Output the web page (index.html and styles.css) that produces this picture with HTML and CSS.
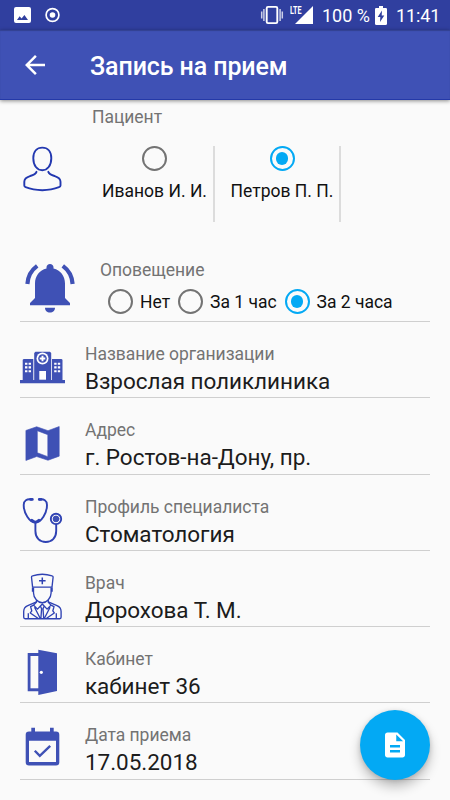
FILE: index.html
```html
<!DOCTYPE html>
<html lang="ru">
<head>
<meta charset="utf-8">
<title>Запись на прием</title>
<link rel="stylesheet" href="styles.css">
</head>
<body>
<div class="screen">
  <div class="status">
    <svg class="status-left" width="64" height="30" viewBox="0 0 64 30">
      <path fill="#fff" fill-rule="evenodd" d="M16 7h13a2 2 0 0 1 2 2v12a2 2 0 0 1-2 2H16a2 2 0 0 1-2-2V9a2 2 0 0 1 2-2zM17 20h11l-3.600-5-2.800 3.600-2-2.400z"/>
      <circle cx="52.500" cy="15" r="6.400" fill="none" stroke="#fff" stroke-width="1.700"/><circle cx="52.500" cy="15" r="2.800" fill="#fff"/>
    </svg>
    <svg class="vibrate" width="24" height="30" viewBox="260 0 24 30" fill="none" stroke="#fff">
      <rect x="266.700" y="6.900" width="10.600" height="16.200" rx="1.300" stroke-width="1.900"/>
      <path stroke-width="1.500" opacity=".75" d="M263.900 9v12M280.100 9v12M261.700 11.500v7M282.300 11.500v7"/>
    </svg>
    <span class="lte">LTE</span>
    <svg class="signal" width="18" height="18" viewBox="0 0 18 18"><path fill="#fff" d="M0 18 18 0v18z"/></svg>
    <span class="percent">100 %</span>
    <svg class="battery" width="12" height="19" viewBox="0 0 12 19"><path fill="#fff" d="M4 0h4v2h2.500A1.300 1.300 0 0 1 12 3.300v14A1.500 1.500 0 0 1 10.500 19h-9A1.500 1.500 0 0 1 0 17.300v-14A1.300 1.300 0 0 1 1.500 2H4z"/><path fill="#303f9f" d="M7 4.500 2.700 11H5.300L5 16l4.300-6.500H6.700z"/></svg>
    <span class="time">11:41</span>
  </div>
  <header class="appbar">
    <svg width="30" height="30" viewBox="0 0 24 24"><path fill="#fff" d="M20 11H7.830l5.590-5.590L12 4l-8 8 8 8 1.410-1.410L7.830 13H20v-2z"/></svg>
    <h1>Запись на прием</h1>
  </header>
  <main>
    <section class="patient">
      <svg class="icon" width="65" height="145" viewBox="20 100 65 145" fill="none" stroke="#2338b0" stroke-width="1.900" stroke-linecap="round">
        <path d="M42.300 147.600c-5.400 0-9 3.900-9 10.600 0 7.400 3.900 12 9 12s9-4.600 9-12c0-6.700-3.600-10.600-9-10.600z"/>
        <path d="M36.500 171.800c-1 2.700-3.200 3.300-6.500 4.300-4.200 1.300-5.700 3-5.700 5.600v3.800c0 1 .5 1.400 1.300 1.700 10 4 23.400 4 33.400 0 .8-.3 1.500-.7 1.500-1.700v-3.800c0-2.600-1.500-4.300-5.700-5.600-3.300-1-5.500-1.600-6.500-4.300"/>
      </svg>
      <div class="patient-body">
        <div class="label">Пациент</div>
        <div class="people">
          <div class="person"><i class="radio"></i><span class="name">Иванов И. И.</span></div>
          <div class="person second"><i class="radio on"></i><span class="name">Петров П. П.</span></div>
        </div>
      </div>
    </section>
    <section class="notify">
      <svg class="icon" width="65" height="76" viewBox="20 245 65 76">
        <path fill="#3f51b5" d="M50 264c2 0 3.500 1.300 3.500 3.200v1.300C60.500 270.300 65 276 65 283.500V298l5 5v2.200H30V303l5-5v-14.500c0-7.500 4.500-13.200 11.500-15v-1.300c0-1.900 1.500-3.200 3.500-3.200zM45 307.700h10c0 2.700-2 4.800-5 4.800s-5-2.100-5-4.800z"/>
        <path fill="none" stroke="#3f51b5" stroke-width="4.200" d="M37.200 265.900c-5.500 4-9.300 10-9.800 18.100M62.800 265.900c5.500 4 9.300 10 9.800 18.100"/>
      </svg>
      <div class="notify-body">
        <div class="label">Оповещение</div>
        <div class="options">
          <span class="option o1"><i class="radio"></i><span>Нет</span></span>
          <span class="option o2"><i class="radio"></i><span>За 1 час</span></span>
          <span class="option o3"><i class="radio on"></i><span>За 2 часа</span></span>
        </div>
      </div>
    </section>
    <section class="row">
      <svg class="icon" width="65" height="75" viewBox="20 322 65 75">
        <path fill="#3f51b5" d="M20 380h2.700v-20.200l1-.8h9.600v21h.9v-27l1.200-1.300H50l1.200 1.300v27h.8v-21h9.500l1 .8V380H65v3.200H20z"/>
        <circle cx="42.500" cy="358.500" r="6" fill="#fff"/><circle cx="42.500" cy="358.500" r="4.300" fill="#3f51b5"/>
        <path stroke="#fff" stroke-width="1.900" d="M42.500 355.700v5.600M39.700 358.500h5.600"/>
        <path fill="#fff" d="M39.300 371H46v8.700h-6.700z"/>
        <path stroke="#fff" stroke-width="2.100" stroke-dasharray="2.400 1.200" d="M25 363.700h6M25 367.400h6M25 371.200h6M54.200 363.700h6M54.200 367.400h6M54.200 371.200h6"/>
      </svg>
      <div><div class="label">Название организации</div><div class="value">Взрослая поликлиника</div></div>
    </section>
    <section class="row">
      <svg class="icon" width="65" height="75" viewBox="20 398.250 65 75"><path fill="#3f51b5" stroke="#3f51b5" stroke-width=".6" fill-rule="evenodd" d="m25.900 430.700 10.800-3.700 11.300 3.900 11.200-4.100v29.600L48 460.500l-11.300-3.700-10.800 3.900zM37.300 431v22l10.500 3.900v-22z"/></svg>
      <div><div class="label">Адрес</div><div class="value">г. Ростов-на-Дону, пр.</div></div>
    </section>
    <section class="row">
      <svg class="icon" width="65" height="75" viewBox="20 474.500 65 75" fill="none" stroke="#2f42b3" stroke-width="1.900" stroke-linecap="round">
        <path d="M31.500 499c-4.500-.8-7.800 1-7.800 5.500 0 8 5.700 17.500 11.700 17.500S47 512.500 47 504.500c0-4.500-3.300-6.300-7.400-5.500M35.400 522v8.500c0 7 4.500 11 10.400 11s10.400-4 10.400-11V524"/>
        <path stroke-width="2.900" d="M30.600 498.900h1.700M39.300 498.900H41M31.800 519.800c2.400 2.500 4.800 2.500 7.200 0"/>
        <circle cx="56" cy="518.400" r="5.200"/><circle cx="56" cy="518.400" r="2.900" fill="#3f51b5" stroke-width=".8"/>
      </svg>
      <div><div class="label">Профиль специалиста</div><div class="value">Стоматология</div></div>
    </section>
    <section class="row">
      <svg class="icon" width="65" height="75" viewBox="20 550.750 65 75" fill="none" stroke="#2f42b3" stroke-width="1.350" stroke-linejoin="round">
        <path d="M32.600 586.800 31.500 577c-.1-.8.3-1.200 1-1.400 6.300-2 13.300-2 19.600 0 .7.200 1.100.6 1 1.400L52 586.800z"/>
        <path stroke-width="1.500" d="M42.300 577.300v6.600M39 580.600h6.600"/>
        <path d="M33.500 587.300v5.500c0 4.800 4.400 9.700 8.800 9.700s8.800-4.900 8.800-9.700v-5.500M32.500 587.300v4.300M52.100 587.300v4.300M36.500 599.500v2.200l-8.700 3.600c-2.900 1.200-4.100 3-4.100 6v5.800c0 .9.500 1.400 1.400 1.400h34.600c.9 0 1.400-.5 1.400-1.400v-5.800c0-3-1.200-4.800-4.100-6l-8.700-3.600v-2.200"/>
        <path d="m36.500 601.700-2.900 3.200 3.900 4 4.800-5.200 4.800 5.200 3.900-4-2.900-3.200M33.600 604.900l-3 1.500 1.200 4.300-1.500 2 8 5.600M51 604.900l3 1.500-1.200 4.300 1.500 2-8 5.600M34.500 607l5.800 11.300M50.100 607l-5.800 11.300M40.500 606l1.100 2.500-.7 9.500M44.100 606l-1.100 2.500.7 9.500M28.300 613v5.300M56.300 613v5.300"/>
      </svg>
      <div><div class="label">Врач</div><div class="value">Дорохова Т. М.</div></div>
    </section>
    <section class="row">
      <svg class="icon" width="65" height="75" viewBox="20 627 65 75"><path fill="#3f51b5" d="M27.700 653h10.600v-3.300L57 653.300V691l-18.700 4v-3.800H27.700z"/><path fill="#fafafa" d="M30.500 656h7.800v32.300h-7.800z"/><circle cx="41.300" cy="672.300" r="1.600" fill="#fff"/></svg>
      <div><div class="label">Кабинет</div><div class="value">кабинет 36</div></div>
    </section>
    <section class="row">
      <svg class="icon" width="65" height="75" viewBox="20 703.250 65 75"><path fill="#3f51b5" fill-rule="evenodd" d="M31.300 728H35v3.700h15V728h3.700v3.700H56a3.300 3.300 0 0 1 3.300 3.300v27.400a3.300 3.300 0 0 1-3.300 3.300H29a3.300 3.300 0 0 1-3.300-3.300V735a3.300 3.300 0 0 1 3.300-3.300h2.300zM29 741v21.300h27V741z"/><path fill="none" stroke="#3f51b5" stroke-width="2.400" d="m34.800 751 5 5 10.400-9.800"/></svg>
      <div><div class="label">Дата приема</div><div class="value">17.05.2018</div></div>
    </section>
  </main>
  <button class="fab" aria-label="Документ"><svg width="30" height="30" viewBox="0 0 24 24"><path fill="#fff" d="M14 2H6c-1.100 0-1.990.9-1.990 2L4 20c0 1.100.89 2 1.990 2H18c1.100 0 2-.9 2-2V8l-6-6zm2 16H8v-2h8v2zm0-4H8v-2h8v2zm-3-5V3.500L18.500 9H13z"/></svg></button>
</div>
</body>
</html>
```
FILE: styles.css
```css
* { box-sizing: border-box; }
body { margin: 0; background: #fafafa; font-family: Roboto, "Noto Sans", sans-serif; }
svg { display: block; flex: none; }
.screen { position: relative; width: 450px; height: 800px; overflow: hidden; }

.status { display: flex; align-items: center; height: 30px; background: #303f9f; color: #fff; font-size: 18px; white-space: nowrap; }
.vibrate { margin-left: 196px; }
.lte { align-self: flex-start; margin: 5px 0 0 6px; width: 12px; font: 700 10px/11px "Roboto", sans-serif; transform: scaleX(.72); transform-origin: left; }
.signal { margin-left: -7px; }
.percent { width: 48px; margin-left: 9px; line-height: 30px; padding-top: 1px; }
.battery { margin-left: 5px; }
.time { margin-left: 9px; line-height: 30px; letter-spacing: -0.1px; padding-top: 1px; }

.appbar { position: relative; display: flex; align-items: center; height: 70px; padding-left: 20px; background: #3f51b5; color: #fff; border-bottom: 1px solid #2439a8; box-shadow: 0 1px 4px rgba(0, 0, 0, .45), inset 0 1px 1px rgba(0, 0, 0, .2); }
.appbar h1 { margin: 4px 0 0 40px; font-size: 25px; line-height: 30px; font-weight: 500; letter-spacing: -0.1px; white-space: nowrap; }

.label { color: #737373; font-size: 17.5px; line-height: 21px; letter-spacing: -0.03px; white-space: nowrap; }
.value { margin-top: 2px; color: #1c1c1c; font-size: 22.5px; line-height: 28px; letter-spacing: -0.04px; white-space: nowrap; }

.patient { display: flex; height: 145px; padding-left: 20px; }
.patient-body { padding: 7px 0 0 7px; }
.people { display: flex; margin-top: 18px; }
.person { display: flex; flex-direction: column; align-items: center; width: 123px; height: 76px; padding-left: 4px; border-right: 2px solid #dcdcdc; color: #111; font-size: 17.5px; white-space: nowrap; }
.person.second { width: 126px; padding-left: 10px; }
.person .radio { margin-top: 0; }
.name { margin-top: 10px; line-height: 21px; }

.radio { display: grid; place-items: center; flex: none; width: 25px; height: 25px; border: 2.5px solid #737373; border-width: 2.5px; border-radius: 50%; }
.radio.on { border-color: #03a9f4; }
.radio.on::after { content: ""; width: 12.5px; height: 12.5px; border-radius: 50%; background: #03a9f4; }

.notify { display: flex; height: 77px; margin: 0 20px; border-bottom: 1px solid #cfcfcf; }
.notify-body { padding: 15px 0 0 15px; }
.options { display: flex; margin: 8px 0 0 8px; }
.option { display: flex; align-items: center; gap: 7px; height: 25px; color: #111; font-size: 17.5px; white-space: nowrap; }
.o1 { width: 70px; }
.o2 { width: 106.5px; }

.row { display: flex; height: 76.25px; margin: 0 20px; border-bottom: 1px solid #cfcfcf; }
.row > div { padding-top: 22px; }

.fab { position: absolute; left: 360px; top: 710px; display: grid; place-items: center; width: 70px; height: 70px; padding: 0; border: 0; border-radius: 50%; background: #03a9f4; box-shadow: 0 7px 12px rgba(0, 0, 0, .24), 0 1px 5px rgba(0, 0, 0, .14); }
```
